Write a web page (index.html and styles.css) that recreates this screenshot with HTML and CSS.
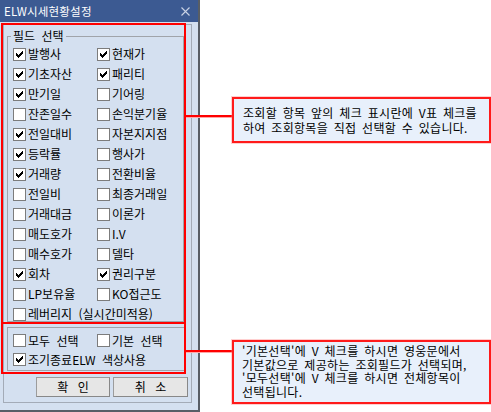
FILE: index.html
```html
<!DOCTYPE html>
<html lang="ko">
<head>
<meta charset="utf-8">
<title>ELW시세현황설정</title>
<link rel="stylesheet" href="styles.css">
</head>
<body>
<div class="page">
  <div class="dialog">
    <div class="titlebar">
      <span class="title">ELW시세현황설정</span>
      <svg class="close" width="9" height="9" viewBox="0 0 9 9"><path d="M0.5 0.5L8.5 8.5M8.5 0.5L0.5 8.5" stroke="#c9d2e4" stroke-width="1.1" fill="none"/></svg>
    </div>
    <div class="frame">
      <fieldset class="group fields">
        <legend>필드 선택</legend>
        <div class="grid">
          <label class="item"><span class="cb on"></span>발행사</label>
          <label class="item"><span class="cb on"></span>현재가</label>
          <label class="item"><span class="cb on"></span>기초자산</label>
          <label class="item"><span class="cb on"></span>패리티</label>
          <label class="item"><span class="cb on"></span>만기일</label>
          <label class="item"><span class="cb"></span>기어링</label>
          <label class="item"><span class="cb"></span>잔존일수</label>
          <label class="item"><span class="cb"></span>손익분기율</label>
          <label class="item"><span class="cb on"></span>전일대비</label>
          <label class="item"><span class="cb"></span>자본지지점</label>
          <label class="item"><span class="cb on"></span>등락률</label>
          <label class="item"><span class="cb"></span>행사가</label>
          <label class="item"><span class="cb on"></span>거래량</label>
          <label class="item"><span class="cb"></span>전환비율</label>
          <label class="item"><span class="cb"></span>전일비</label>
          <label class="item"><span class="cb"></span>최종거래일</label>
          <label class="item"><span class="cb"></span>거래대금</label>
          <label class="item"><span class="cb"></span>이론가</label>
          <label class="item"><span class="cb"></span>매도호가</label>
          <label class="item"><span class="cb"></span>I.V</label>
          <label class="item"><span class="cb"></span>매수호가</label>
          <label class="item"><span class="cb"></span>델타</label>
          <label class="item"><span class="cb on"></span>회차</label>
          <label class="item"><span class="cb on"></span>권리구분</label>
          <label class="item"><span class="cb"></span>LP보유율</label>
          <label class="item"><span class="cb"></span>KO접근도</label>
          <label class="item span2"><span class="cb"></span>레버리지 (실시간미적용)</label>
        </div>
      </fieldset>
      <fieldset class="group opts">
        <div class="grid2">
          <label class="item"><span class="cb"></span>모두 선택</label>
          <label class="item"><span class="cb"></span>기본 선택</label>
          <label class="item span2"><span class="cb on"></span>조기종료ELW 색상사용</label>
        </div>
      </fieldset>
      <div class="buttons">
        <button class="btn ok">확 인</button>
        <button class="btn cancel">취 소</button>
      </div>
    </div>
    <div class="hl hl1"></div>
    <div class="hl hl2"></div>
  </div>
  <div class="notes">
    <div class="note n1">
      <span class="wire"></span>
      <div class="box">조회할 항목 앞의 체크 표시란에 V표 체크를<br>하여 조회항목을 직접 선택할 수 있습니다.</div>
    </div>
    <div class="note n2">
      <span class="wire"></span>
      <div class="box">'기본선택'에 V 체크를 하시면 영웅문에서<br>기본값으로 제공하는 조회필드가 선택되며,<br>'모두선택'에 V 체크를 하시면 전체항목이<br>선택됩니다.</div>
    </div>
  </div>
</div>
</body>
</html>
```

FILE: styles.css
```css
html, body {
  margin: 0;
  padding: 0;
  background: #ffffff;
}
body {
  font-family: "Noto Sans CJK KR", "Noto Sans", sans-serif;
  font-size: 12px;
  color: #000;
}
.page {
  display: flex;
  width: 491px;
  height: 412px;
  overflow: hidden;
}
.dialog {
  position: relative;
  flex: none;
  width: 200px;
  height: 412px;
  box-sizing: border-box;
  background: #d4e0f0;
  border-right: 2px solid #585e66;
  border-bottom: 2px solid #585e66;
}
.titlebar {
  height: 22px;
  background: #3c5a92;
  display: flex;
  align-items: center;
  justify-content: space-between;
  padding: 0 8px 0 4px;
}
.title {
  color: #ffffff;
  font-size: 11.5px;
  line-height: 12px;
  letter-spacing: 0.2px;
}
.close {
  display: block;
  margin-top: 1px;
}
.frame {
  margin: 2px 0 0 3px;
  width: 189px;
  height: 379px;
  box-sizing: border-box;
  border: 1px solid #a3abb7;
  padding: 0 0 0 3px;
}
.group {
  margin: 0;
  box-sizing: border-box;
  border: 1px solid #a0a4aa;
  min-width: 0;
}
.fields {
  margin-top: 5px;
  width: 177px;
  padding: 2px 0 0 5px;
}
.fields legend {
  padding: 0 2px;
  margin-left: -2px;
  font-size: 12px;
  line-height: 12px;
  word-spacing: 3px;
}
.grid {
  display: grid;
  grid-template-columns: 84px 1fr;
  grid-auto-rows: 20px;
  height: 277px;
}
.opts {
  margin-top: 5px;
  width: 178px;
  padding: 3px 0 1px 5px;
}
.grid2 {
  display: grid;
  grid-template-columns: 84px 1fr;
  grid-auto-rows: 19px;
}
.item {
  display: flex;
  align-items: center;
  gap: 2px;
  white-space: nowrap;
  line-height: 14px;
  word-spacing: 3px;
}
.span2 {
  grid-column: span 2;
}
.cb {
  flex: none;
  width: 13px;
  height: 13px;
  box-sizing: border-box;
  border: 1px solid #7c7c7c;
  background: #ffffff;
}
.cb.on {
  background: #ffffff url("data:image/svg+xml,%3Csvg xmlns='http://www.w3.org/2000/svg' width='11' height='11' viewBox='0 0 11 11' shape-rendering='crispEdges'%3E%3Cpath d='M2 4h1v3h-1zM3 5h1v3h-1zM4 6h1v3h-1zM5 5h1v3h-1zM6 4h1v3h-1zM7 3h1v3h-1zM8 2h1v3h-1z' fill='%23000'/%3E%3C/svg%3E") no-repeat 0 0;
}
.buttons {
  display: flex;
  gap: 3px;
  margin: 6px 0 0 29px;
}
.btn {
  height: 20px;
  padding: 0;
  margin: 0;
  box-sizing: border-box;
  background: #e6e6e6;
  border: 1px solid #9c9c9c;
  border-right-color: #888;
  border-bottom-color: #888;
  font-family: "Noto Sans CJK KR", "Noto Sans", sans-serif;
  font-size: 12px;
  line-height: 14px;
  color: #000;
  word-spacing: 6px;
}
.ok { width: 74px; }
.cancel { width: 75px; }
.hl {
  position: absolute;
  left: 1px;
  width: 185px;
  box-sizing: border-box;
  border: 2px solid #ff0000;
}
.hl1 { top: 23px; height: 301px; }
.hl2 { top: 322px; height: 52px; }
.notes {
  position: relative;
  flex: 1;
  padding-top: 97px;
}
.note {
  display: flex;
  align-items: flex-start;
  margin-left: -14px;
}
.wire {
  flex: none;
  width: 46px;
  height: 2px;
  background: #ff0000;
  border-bottom: 1px solid #ffa6a6;
}
.box {
  width: 259px;
  box-sizing: border-box;
  border: 2px solid #ff1a1a;
  background: #e8f0fb;
  white-space: nowrap;
  word-spacing: 2px;
  letter-spacing: 0.3px;
  box-shadow: 0 0 0 1px rgba(255, 120, 120, 0.35);
}
.n1 .wire { margin-top: 18px; }
.n1 .box {
  line-height: 15px;
  padding: 6px 0 6px 9px;
}
.n2 { margin-top: 197px; }
.n2 .wire { margin-top: 10px; }
.n2 .box {
  line-height: 13.5px;
  padding: 2px 0 4px 8px;
}
```
